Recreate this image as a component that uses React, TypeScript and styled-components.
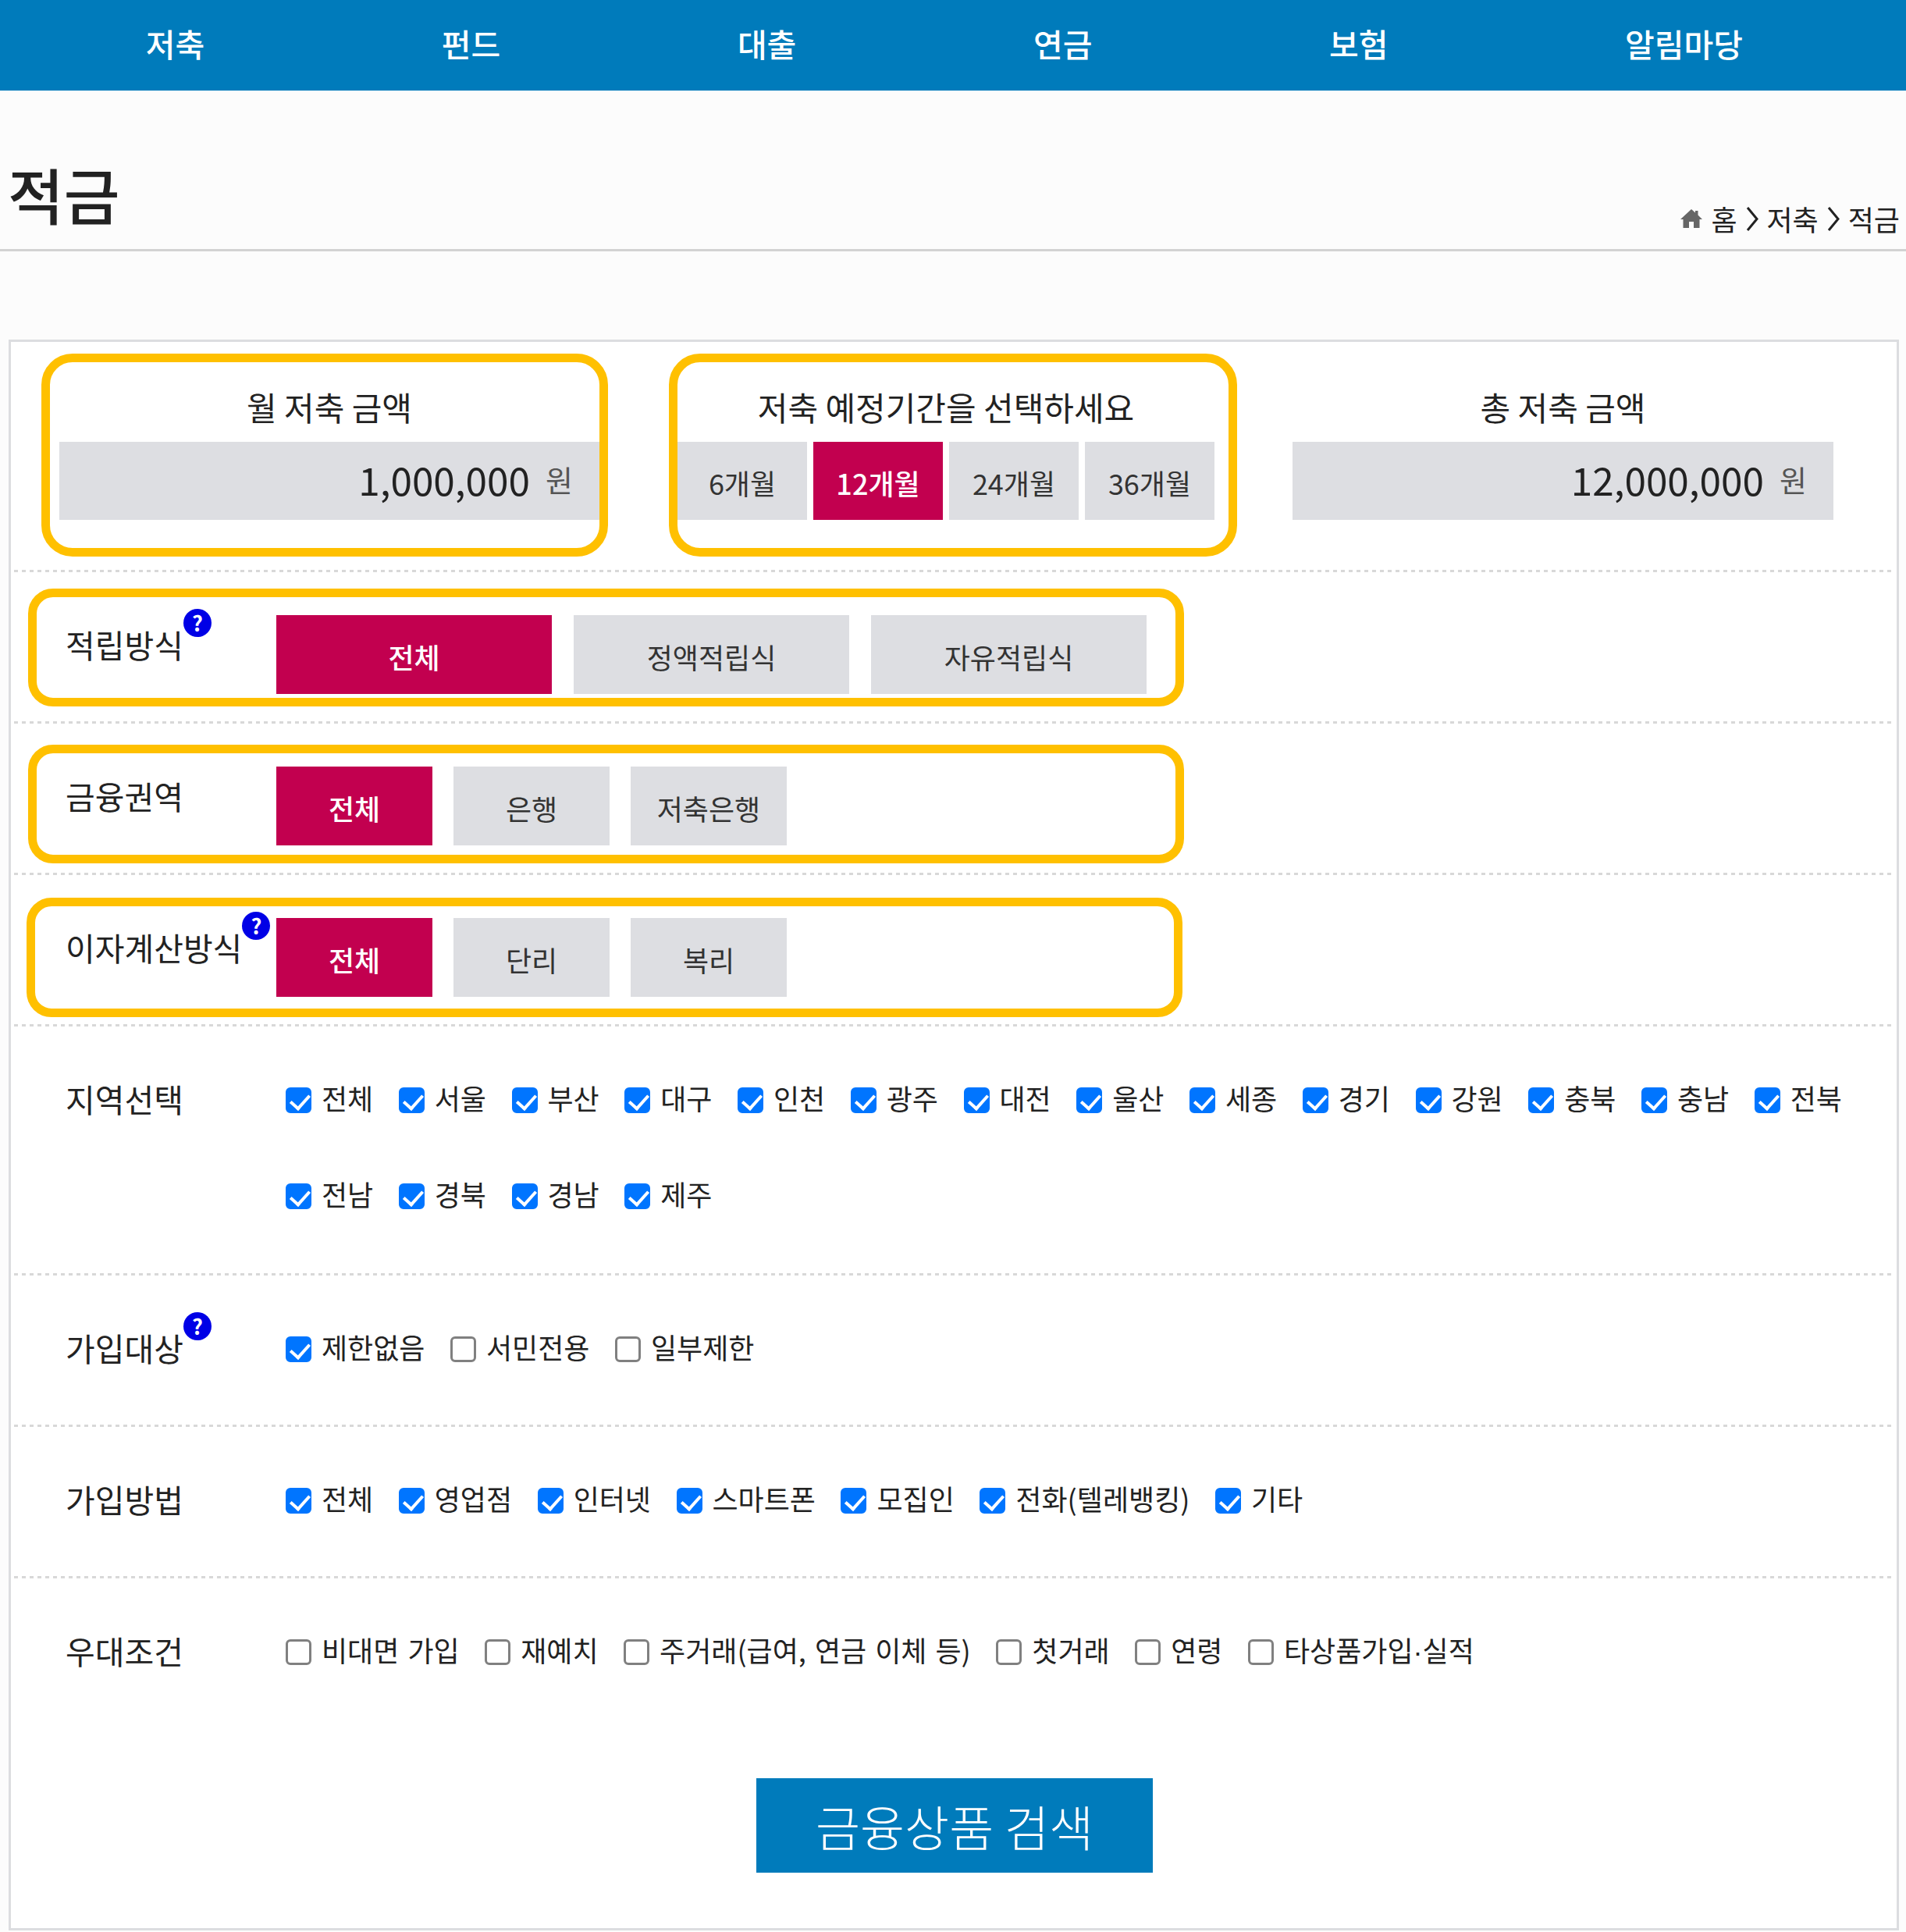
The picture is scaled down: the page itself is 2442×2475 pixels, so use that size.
import type { ReactNode } from "react";
import styled, { createGlobalStyle } from "styled-components";

const GlobalStyle = createGlobalStyle`
  html, body {
    margin: 0;
    padding: 0;
    background: #fcfcfc;
    font-family: "Noto Sans CJK KR", "Noto Sans", sans-serif;
    color: #222;
  }
  * { box-sizing: border-box; }
`;

const dottedLine = `
  background: repeating-linear-gradient(90deg, #d8d8d8 0 5px, transparent 5px 10px) left bottom / 100% 3px no-repeat;
`;

const Page = styled.div`
  width: 2442px;
  height: 2475px;
  overflow: hidden;
`;

const Nav = styled.nav`
  display: flex;
  height: 116px;
  padding-left: 35px;
  background: #007bbb;
`;

const NavItem = styled.a`
  padding: 0 151.8px;
  font-size: 41px;
  font-weight: 500;
  line-height: 110px;
  color: #fff;
`;

const TitleBar = styled.div`
  display: flex;
  justify-content: space-between;
  align-items: flex-end;
  height: 206px;
  padding: 0 8px 0 10px;
  border-bottom: 3px solid #d2d2d2;
`;

const Title = styled.h1`
  margin: 0 0 26px;
  font-size: 78px;
  font-weight: 500;
  line-height: 90px;
`;

const Crumbs = styled.div`
  display: flex;
  align-items: center;
  gap: 11px;
  margin-bottom: 10px;
  font-size: 36px;
  line-height: 58px;
`;

const Panel = styled.main`
  position: relative;
  width: 2422px;
  margin: 113px 0 0 11px;
  padding-bottom: 71px;
  background: #fff;
  border: 3px solid #dcdde0;
`;

const TopRow = styled.section`
  display: flex;
  gap: 100px;
  height: 295px;
  margin: 0 2px 0 4px;
  padding: 53px 0 0 58px;
  ${dottedLine}
`;

const Column = styled.div<{ $width: number }>`
  position: relative;
  width: ${(p) => p.$width}px;
`;

const ColumnTitle = styled.h2`
  margin: 0 0 15px;
  font-size: 42px;
  font-weight: 400;
  line-height: 60px;
  text-align: center;
`;

const Amount = styled.div`
  display: flex;
  justify-content: flex-end;
  align-items: center;
  gap: 20px;
  height: 100px;
  padding: 0 34px 4px 0;
  background: #dddee2;
`;

const AmountValue = styled.span`
  font-size: 49.5px;
  line-height: 1;
`;

const AmountUnit = styled.span`
  font-size: 38px;
  line-height: 1;
  color: #555;
`;

const Months = styled.div`
  display: flex;
  gap: 8px;
`;

const Choice = styled.button<{ $active?: boolean; $width: number; $height: number }>`
  width: ${(p) => p.$width}px;
  height: ${(p) => p.$height}px;
  padding: 4px 0 0;
  border: 0;
  font-family: inherit;
  font-size: 36px;
  font-weight: ${(p) => (p.$active ? 500 : 400)};
  background: ${(p) => (p.$active ? "#c2004f" : "#dddee2")};
  color: ${(p) => (p.$active ? "#fff" : "#333")};
`;

const Row = styled.section<{ $bottom?: number; $last?: boolean }>`
  position: relative;
  display: flex;
  min-height: ${(p) => (p.$last ? 191 : 194)}px;
  margin: 0 2px 0 4px;
  padding: 55px 0 ${(p) => p.$bottom ?? 38}px;
  ${(p) => (p.$last ? "" : dottedLine)}
`;

const Label = styled.div`
  position: relative;
  flex: 0 0 336px;
  margin-top: -2px;
  padding-left: 66px;
  font-size: 41px;
  line-height: 78px;
`;

const LabelText = styled.span`
  position: relative;
`;

const Help = styled.span`
  position: absolute;
  top: -15px;
  right: -36px;
  width: 36px;
  height: 36px;
  border-radius: 50%;
  background: #0000e6;
  color: #fff;
  font-size: 27px;
  font-weight: 700;
  line-height: 36px;
  text-align: center;
`;

const ButtonGroup = styled.div<{ $gap: number }>`
  display: flex;
  gap: ${(p) => p.$gap}px;
`;

const CheckGroup = styled.div`
  display: flex;
  flex-wrap: wrap;
  align-content: flex-start;
  gap: 45px 32.5px;
  margin-top: -3px;
  padding-left: 12px;
`;

const CheckLabel = styled.label`
  display: flex;
  align-items: center;
  gap: 13px;
  height: 78px;
  font-size: 36px;
  word-spacing: 3px;
  white-space: nowrap;
`;

const CheckInput = styled.input`
  position: relative;
  appearance: none;
  width: 33px;
  height: 33px;
  margin: 7px 0 0;
  background: #fff;
  border: 3px solid #808080;
  border-radius: 6px;

  &:checked {
    background: #0075ff;
    border-color: #0075ff;
  }

  &:checked::after {
    content: "";
    position: absolute;
    left: 8px;
    top: 1px;
    width: 11px;
    height: 20px;
    border: solid #fff;
    border-width: 0 4px 4px 0;
    transform: rotate(42deg);
  }
`;

const Ring = styled.div<{ $top: number; $left: number; $width: number; $height: number; $radius?: number }>`
  position: absolute;
  top: ${(p) => p.$top}px;
  left: ${(p) => p.$left}px;
  width: ${(p) => p.$width}px;
  height: ${(p) => p.$height}px;
  border: 11px solid #ffc000;
  border-radius: ${(p) => p.$radius ?? 32}px;
  pointer-events: none;
`;

const NarrowDot = styled.span`
  font-family: "Liberation Sans", sans-serif;
`;

const SearchRow = styled.div`
  display: flex;
  justify-content: center;
  margin: 65px 0 0 2px;
`;

const SearchButton = styled.button`
  width: 508px;
  height: 121px;
  border: 0;
  background: #007bbb;
  color: #fff;
  font-family: inherit;
  font-size: 62px;
  font-weight: 300;
`;

const navItems = ["저축", "펀드", "대출", "연금", "보험", "알림마당"];
const months = ["6개월", "12개월", "24개월", "36개월"];
const regions = ["전체", "서울", "부산", "대구", "인천", "광주", "대전", "울산", "세종", "경기", "강원", "충북", "충남", "전북", "전남", "경북", "경남", "제주"];
const targets = [["제한없음", true], ["서민전용", false], ["일부제한", false]] as const;
const methods = ["전체", "영업점", "인터넷", "스마트폰", "모집인", "전화(텔레뱅킹)", "기타"];
const perks = ["비대면 가입", "재예치", "주거래(급여, 연금 이체 등)", "첫거래", "연령"];

function HomeIcon() {
  return (
    <svg width="28" height="26" viewBox="0 0 28 26" fill="#666">
      <path d="M14 1 L19 5.5 L19 3 L22.5 3 L22.5 8.6 L28 14 L24.5 14 L24.5 25 L17 25 L17 17 L11 17 L11 25 L3.5 25 L3.5 14 L0 14 Z" />
    </svg>
  );
}

function Chevron() {
  return (
    <svg width="16" height="33" viewBox="0 0 16 33" fill="none" stroke="#222" strokeWidth="3">
      <path d="M2 2 L14 16.5 L2 31" />
    </svg>
  );
}

function Check({ children, checked }: { children: ReactNode; checked: boolean }) {
  return (
    <CheckLabel>
      <CheckInput type="checkbox" defaultChecked={checked} />
      <span>{children}</span>
    </CheckLabel>
  );
}

export default function App() {
  return (
    <Page>
      <GlobalStyle />
      <Nav>
        {navItems.map((n) => (
          <NavItem key={n}>{n}</NavItem>
        ))}
      </Nav>
      <TitleBar>
        <Title>적금</Title>
        <Crumbs>
          <HomeIcon />
          <span>홈</span>
          <Chevron />
          <span>저축</span>
          <Chevron />
          <span>적금</span>
        </Crumbs>
      </TitleBar>

      <Panel>
        <TopRow>
          <Column $width={692}>
            <ColumnTitle>월 저축 금액</ColumnTitle>
            <Amount>
              <AmountValue>1,000,000</AmountValue>
              <AmountUnit>원</AmountUnit>
            </Amount>
            <Ring $top={-38} $left={-23} $width={726} $height={260} $radius={40} />
          </Column>
          <Column $width={688}>
            <ColumnTitle>저축 예정기간을 선택하세요</ColumnTitle>
            <Months>
              {months.map((m) => (
                <Choice key={m} $width={166} $height={100} $active={m === "12개월"}>
                  {m}
                </Choice>
              ))}
            </Months>
            <Ring $top={-38} $left={-11} $width={728} $height={260} $radius={40} />
          </Column>
          <Column $width={693}>
            <ColumnTitle>총 저축 금액</ColumnTitle>
            <Amount>
              <AmountValue>12,000,000</AmountValue>
              <AmountUnit>원</AmountUnit>
            </Amount>
          </Column>
        </TopRow>

        <Row>
          <Label>
            <LabelText>
              적립방식
              <Help>?</Help>
            </LabelText>
          </Label>
          <ButtonGroup $gap={28}>
            {["전체", "정액적립식", "자유적립식"].map((t, i) => (
              <Choice key={t} $width={353} $height={101} $active={i === 0}>
                {t}
              </Choice>
            ))}
          </ButtonGroup>
          <Ring $top={21} $left={18} $width={1481} $height={151} />
        </Row>

        <Row>
          <Label>
            <LabelText>금융권역</LabelText>
          </Label>
          <ButtonGroup $gap={27}>
            {["전체", "은행", "저축은행"].map((t, i) => (
              <Choice key={t} $width={200} $height={101} $active={i === 0}>
                {t}
              </Choice>
            ))}
          </ButtonGroup>
          <Ring $top={27} $left={18} $width={1481} $height={152} />
        </Row>

        <Row>
          <Label>
            <LabelText>
              이자계산방식
              <Help>?</Help>
            </LabelText>
          </Label>
          <ButtonGroup $gap={27}>
            {["전체", "단리", "복리"].map((t, i) => (
              <Choice key={t} $width={200} $height={101} $active={i === 0}>
                {t}
              </Choice>
            ))}
          </ButtonGroup>
          <Ring $top={29} $left={16} $width={1481} $height={153} />
        </Row>

        <Row $bottom={66}>
          <Label>
            <LabelText>지역선택</LabelText>
          </Label>
          <CheckGroup>
            {regions.map((r) => (
              <Check key={r} checked>
                {r}
              </Check>
            ))}
          </CheckGroup>
        </Row>

        <Row>
          <Label>
            <LabelText>
              가입대상
              <Help>?</Help>
            </LabelText>
          </Label>
          <CheckGroup>
            {targets.map(([t, c]) => (
              <Check key={t} checked={c}>
                {t}
              </Check>
            ))}
          </CheckGroup>
        </Row>

        <Row>
          <Label>
            <LabelText>가입방법</LabelText>
          </Label>
          <CheckGroup>
            {methods.map((m) => (
              <Check key={m} checked>
                {m}
              </Check>
            ))}
          </CheckGroup>
        </Row>

        <Row $last>
          <Label>
            <LabelText>우대조건</LabelText>
          </Label>
          <CheckGroup>
            {perks.map((p) => (
              <Check key={p} checked={false}>
                {p}
              </Check>
            ))}
            <Check checked={false}>
              타상품가입<NarrowDot>·</NarrowDot>실적
            </Check>
          </CheckGroup>
        </Row>

        <SearchRow>
          <SearchButton>금융상품 검색</SearchButton>
        </SearchRow>
      </Panel>
    </Page>
  );
}
